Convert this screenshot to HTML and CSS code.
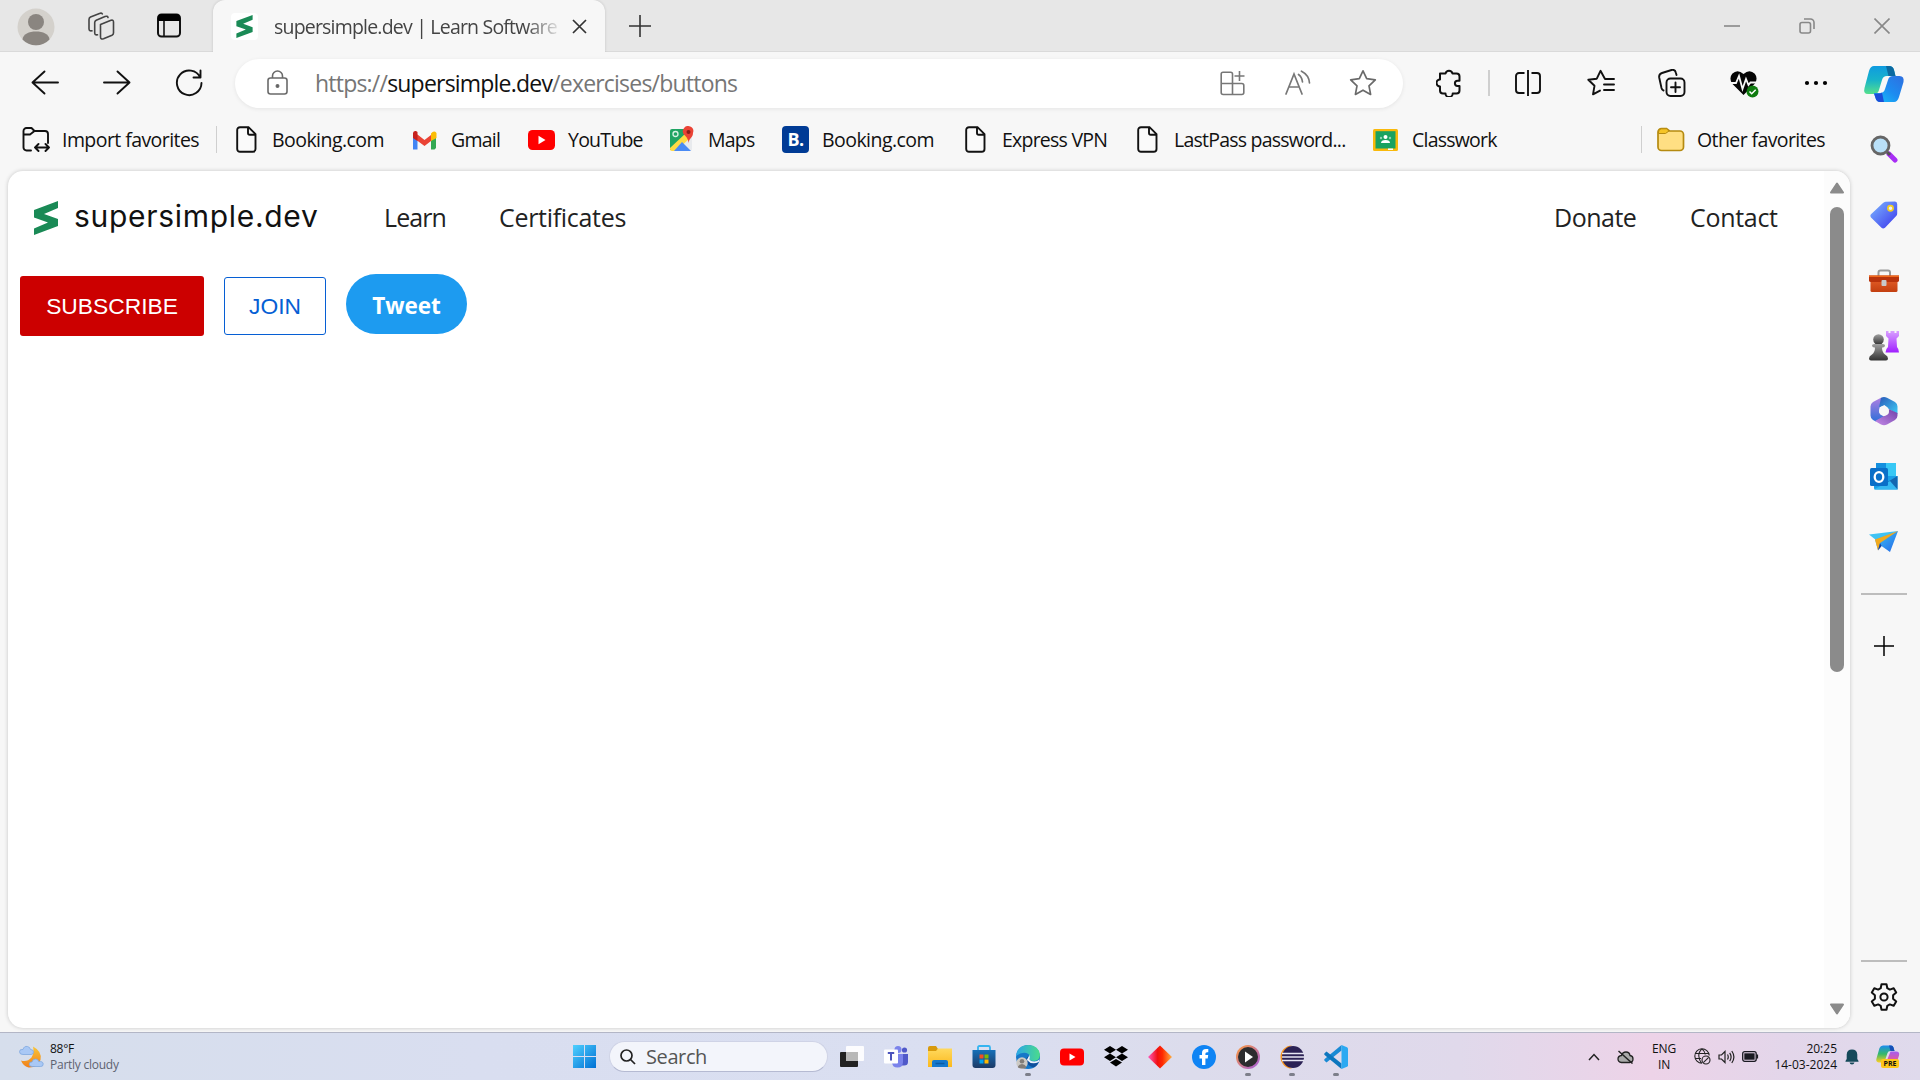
FILE: index.html
```html
<!DOCTYPE html>
<html lang="en">
<head>
<meta charset="utf-8">
<title>supersimple.dev | Learn Software</title>
<link rel="stylesheet" href="styles.css">
</head>
<body>
<svg class="defs" width="0" height="0">
  <defs>
    <linearGradient id="gTeal" x1="0" y1="0" x2="0" y2="1"><stop offset="0" stop-color="#0f9be0"/><stop offset=".5" stop-color="#18b3c9"/><stop offset="1" stop-color="#55e08c"/></linearGradient>
    <linearGradient id="gBlue" x1="1" y1="0" x2="0" y2="1"><stop offset="0" stop-color="#2f6fe0"/><stop offset=".5" stop-color="#1d8bf0"/><stop offset="1" stop-color="#17c3fa"/></linearGradient>
    <linearGradient id="gTag" x1="0" y1="0" x2="1" y2="1"><stop offset="0" stop-color="#7db8ff"/><stop offset="1" stop-color="#3a35ec"/></linearGradient>
    <linearGradient id="gBox" x1="0" y1="0" x2="0" y2="1"><stop offset="0" stop-color="#e8622a"/><stop offset="1" stop-color="#c33f10"/></linearGradient>
    <linearGradient id="gPawn" x1="0" y1="0" x2="0" y2="1"><stop offset="0" stop-color="#a0a0a0"/><stop offset="1" stop-color="#333"/></linearGradient>
    <linearGradient id="gRook" x1="0" y1="0" x2="0" y2="1"><stop offset="0" stop-color="#d9a0ff"/><stop offset="1" stop-color="#a020ff"/></linearGradient>
    <linearGradient id="gM1" x1="0" y1="0" x2="0" y2="1"><stop offset="0" stop-color="#ae7fe2"/><stop offset="1" stop-color="#2f6fd8"/></linearGradient>
    <linearGradient id="gM2" x1="0" y1="0" x2="1" y2="1"><stop offset="0" stop-color="#2a58b8"/><stop offset="1" stop-color="#3bcbf5"/></linearGradient>
    <linearGradient id="gM3" x1="0" y1="1" x2="1" y2="0"><stop offset="0" stop-color="#c58be8"/><stop offset="1" stop-color="#6f3fa8"/></linearGradient>
    <linearGradient id="gPlane" x1="0" y1="0" x2="1" y2="1"><stop offset="0" stop-color="#3cc8f5"/><stop offset="1" stop-color="#2566e8"/></linearGradient>
    <linearGradient id="gWin" x1="0" y1="0" x2="1" y2="1"><stop offset="0" stop-color="#4fd0ff"/><stop offset="1" stop-color="#0070d4"/></linearGradient>
    <linearGradient id="gStore" x1="0" y1="0" x2="0" y2="1"><stop offset="0" stop-color="#1670b8"/><stop offset="1" stop-color="#1c3a66"/></linearGradient>
    <linearGradient id="gEdge" x1="0" y1="0" x2="1" y2="0"><stop offset="0" stop-color="#2aa6e8"/><stop offset="1" stop-color="#4bdc8a"/></linearGradient>
    <linearGradient id="gDia" x1="0" y1="0" x2="1" y2="0"><stop offset="0" stop-color="#ff5bc0"/><stop offset=".4" stop-color="#f01010"/><stop offset=".6" stop-color="#ff2a00"/><stop offset="1" stop-color="#ffb040"/></linearGradient>
    <linearGradient id="gMed" x1="0" y1="0" x2="1" y2="1"><stop offset="0" stop-color="#ff9c3a"/><stop offset="1" stop-color="#a05be0"/></linearGradient>
    <linearGradient id="gMoon" x1="0" y1="0" x2="0" y2="1"><stop offset="0" stop-color="#f8c63a"/><stop offset="1" stop-color="#f07f1a"/></linearGradient>
    <linearGradient id="gFold" x1="0" y1="0" x2="0" y2="1"><stop offset="0" stop-color="#ffd95e"/><stop offset="1" stop-color="#fbb91e"/></linearGradient>
    <linearGradient id="gPre" x1="0" y1="0" x2="0" y2="1"><stop offset="0" stop-color="#1a8cf0"/><stop offset=".5" stop-color="#35b86a"/><stop offset="1" stop-color="#ffd020"/></linearGradient>
    <linearGradient id="gPre2" x1="0" y1="0" x2="0" y2="1"><stop offset="0" stop-color="#a55cf0"/><stop offset="1" stop-color="#fa5a78"/></linearGradient>
    <symbol id="page" viewBox="0 0 21 27"><path d="M4 1.2h8.5l7 7V23a2.8 2.8 0 0 1-2.8 2.8H4A2.8 2.8 0 0 1 1.2 23V4A2.8 2.8 0 0 1 4 1.2ZM12 1.5V7a1.8 1.8 0 0 0 1.8 1.8h5.7" fill="#fafafa" stroke="#111" stroke-width="1.900"/></symbol>
    <symbol id="slogo" viewBox="0 0 24 34"><path d="M24 0V7L10 13L24 18V25L0 34V27.5L14 21.5L0 16.5V9Z" fill="#1a8a56"/></symbol>
    <symbol id="ytube" viewBox="0 0 27 20"><rect width="27" height="20" rx="4.5" fill="#f00"/><path d="M10.5 5.8v8.4l7-4.2z" fill="#fff"/></symbol>
  </defs>
</svg>

<main class="browser">
  <header class="tabstrip">
    <div class="avatar"><svg width="38" height="38" viewBox="0 0 38 38"><circle cx="19" cy="19" r="18.5" fill="#d4d1cc"/><circle cx="19" cy="14" r="8" fill="#8a8580"/><path d="M5.5 31.5C6 26 12 23.5 19 23.5s13 2.500 13.500 8A18.500 18.500 0 0 1 5.500 31.500Z" fill="#8a8580"/></svg></div>
    <svg class="ic" width="28" height="28" viewBox="0 0 28 28" fill="none" stroke="#444" stroke-width="1.6" stroke-linejoin="round" stroke-linecap="round"><path d="M13.500 12.500 24 8.300q2.500-.8 2.500 1.700v11q0 1.500-1.500 2.200l-8.500 3.500q-3 1-3-1.700V14q0-1 0-1.500Z"/><path d="M10.500 22.800q-2.800.6-2.800-2V10.500q0-1.600 1.500-2.300L18 4.500q2.500-.8 3 1"/><path d="M5 18.800q-3 .6-3-2V7.500Q2 5.800 3.500 5l9-3.600q2-.7 2.800.5"/></svg>
    <svg class="ic" width="24" height="25" viewBox="0 0 24 25"><rect x="1" y="1.500" width="22" height="22" rx="3.500" fill="none" stroke="#111" stroke-width="2"/><path d="M1 8V5a4 4 0 0 1 4-4h14a4 4 0 0 1 4 4v3Z" fill="#000"/><path d="M7 8v15" stroke="#111" stroke-width="1.600"/></svg>
    <div class="tab">
      <span class="favicon"><svg width="17" height="23"><use href="#slogo"/></svg></span>
      <span class="tab-title">supersimple.dev | Learn Software</span>
      <svg width="15" height="15" viewBox="0 0 15 15"><path d="M1 1l13 13M14 1 1 14" stroke="#333" stroke-width="1.700"/></svg>
    </div>
    <svg class="newtab" width="24" height="24" viewBox="0 0 24 24"><path d="M12 1v22M1 12h22" stroke="#333" stroke-width="1.600"/></svg>
    <div class="winctl">
      <svg width="16" height="16" viewBox="0 0 16 16"><path d="M0 8h16" stroke="#888" stroke-width="1.600"/></svg>
      <svg width="16" height="16" viewBox="0 0 16 16" fill="none" stroke="#888" stroke-width="1.600"><rect x="1" y="4.500" width="10.500" height="10.500" rx="2"/><path d="M5 1h6.500A3.500 3.500 0 0 1 15 4.500V11"/></svg>
      <svg width="16" height="16" viewBox="0 0 16 16"><path d="M.5.5l15 15M15.500.5.5 15.500" stroke="#888" stroke-width="1.600"/></svg>
    </div>
  </header>

  <section class="toolbar">
    <svg width="28" height="28" viewBox="0 0 28 28" fill="none" stroke="#111" stroke-width="1.900" stroke-linecap="round" stroke-linejoin="round"><path d="M27 13.500H1.500M13.500 2.500 1.500 13.500l12 11"/></svg>
    <svg width="28" height="28" viewBox="0 0 28 28" fill="none" stroke="#111" stroke-width="1.900" stroke-linecap="round" stroke-linejoin="round"><path d="M1 13.500h25.500M14.500 2.500l12 11-12 11"/></svg>
    <svg width="28" height="28" viewBox="0 0 28 28" fill="none" stroke="#111" stroke-width="1.900" stroke-linecap="round" stroke-linejoin="round"><path d="M25.300 8.500A12.300 12.300 0 1 0 26.500 14M25.500 1.500v7h-7"/></svg>
    <div class="address">
      <svg width="21" height="26" viewBox="0 0 21 26" fill="none" stroke="#6a6a6a" stroke-width="1.600"><rect x="1" y="8" width="19" height="16" rx="2.500"/><path d="M5.500 8V6a5 5 0 0 1 10 0v2"/><circle cx="10.500" cy="16" r="1.200" fill="#555"/></svg>
      <span class="url">https://<em>supersimple.dev</em>/exercises/buttons</span>
      <svg width="25" height="25" viewBox="0 0 25 25" fill="none" stroke="#777" stroke-width="1.600"><path d="M12.500 12.500V3A1.800 1.800 0 0 0 10.700 1.200H3A1.800 1.800 0 0 0 1.200 3v18.500a2 2 0 0 0 2 2h18.600a2 2 0 0 0 2-2v-7a2 2 0 0 0-2-2H1.200M12.500 12.500v11M19.500 0v10M14.500 5h10"/></svg>
      <svg width="26" height="26" viewBox="0 0 26 26" fill="none" stroke="#777" stroke-width="1.700" stroke-linecap="round"><path d="M1 24 9 4l8 20M4 17h10M13.500 4.500q3.500 2.500 4 7.500M16.500 1.200Q24 5 24.500 13"/></svg>
      <svg width="28" height="28" viewBox="0 0 28 28" fill="none" stroke="#6a6a6a" stroke-width="1.700" stroke-linejoin="round"><path d="m14 1.800 3.700 7.900 8.600 1.100-6.300 6 1.600 8.600L14 21.200l-7.600 4.200L8 16.800l-6.300-6 8.600-1.100Z"/></svg>
    </div>
    <svg width="26" height="28" viewBox="0 0 26 28" fill="none" stroke="#111" stroke-width="2" stroke-linejoin="round"><path d="M4 4.500h5.500a3.600 3.600 0 0 1 7 0H20.500a3 3 0 0 1 3 3v4.200h-2a2.600 2.600 0 0 0 0 5.200h2v4.600a3 3 0 0 1-3 3h-3.800a3.600 3.600 0 0 1-7.200 0H7a3 3 0 0 1-3-3V17.500a3.500 3.500 0 0 1 0-7Z"/></svg>
    <i class="vline"></i>
    <svg width="26" height="28" viewBox="0 0 26 28" fill="none" stroke="#111" stroke-width="1.900"><path d="M13 1v26M9.500 4H4a3 3 0 0 0-3 3v14a3 3 0 0 0 3 3h5.500M16.500 4H22a3 3 0 0 1 3 3v14a3 3 0 0 1-3 3h-5.500"/></svg>
    <svg width="28" height="28" viewBox="0 0 28 28" fill="none" stroke="#111" stroke-width="1.900" stroke-linejoin="round" stroke-linecap="round"><path d="M27 10h-9L13.500 1.800 9.800 9.700l-8.500 1.100 6.200 6-1.500 8.600 7-3.800M17 15.500h10M17 21h10"/></svg>
    <svg width="28" height="28" viewBox="0 0 28 28" fill="none" stroke="#111" stroke-width="1.900" stroke-linecap="round"><rect x="8.500" y="9.500" width="18" height="17.500" rx="4"/><path d="M17.500 13.500v9.500M13 18.300h9M5.500 21.500Q4 21 3.500 19L1.200 8.500Q.7 5 4 4l9.500-3q3.500-.8 4.300 2.500l.7 2.500"/></svg>
    <svg width="29" height="29" viewBox="0 0 29 29"><path d="M13.500 26 2 14.500Q-1.200 9 2.200 4.700 7.500-.5 13.500 5q6-5.500 11.300-.3 3.400 4.300.2 9.800Z" fill="#050505"/><path d="M0 14h6l3-7 3.500 13L16 10l2.500 6 2-2.500H28" fill="none" stroke="#f7f7f7" stroke-width="1.800"/><circle cx="22.500" cy="22.500" r="6" fill="#107c10"/><path d="m19.500 22.500 2.200 2.200 4-4" stroke="#fff" stroke-width="1.500" fill="none"/></svg>
    <svg width="24" height="6" viewBox="0 0 24 6"><circle cx="3" cy="3" r="2.100"/><circle cx="12" cy="3" r="2.100"/><circle cx="21" cy="3" r="2.100"/></svg>
  </section>

  <nav class="bookmarks">
    <a class="import"><svg width="28" height="27" viewBox="0 0 28 27" fill="none" stroke="#111" stroke-width="1.900" stroke-linecap="round" stroke-linejoin="round"><path d="M9 24.500H4.500a3 3 0 0 1-3-3V5a3 3 0 0 1 3-3h5l3 3H23a3 3 0 0 1 3 3v9M1.500 8.500H8L12.500 5M13 21.500h14M16.500 18 13 21.500l3.500 3.500M23.500 18l3.500 3.500-3.500 3.500"/></svg><span>Import favorites</span></a>
    <a class="sep booking"><svg width="27" height="27"><use href="#page"/></svg><span>Booking.com</span></a>
    <a><svg width="27" height="20" viewBox="0 0 27 20"><path d="M2 19.500V5h4.500v14.500H3.500Z" fill="#4285f4"/><path d="M20 19.500V5h5v13l-1.500 1.500Z" fill="#34a853"/><path d="M2 3.500v4L13.500 16l6.500-5V5l-6.500 5L6.500 4.500Z" fill="#ea4335"/><path d="M2 8V3q.5-2.500 3-2l1.500 1v9Z" fill="#c5221f"/><path d="M20 11V3.500q3-3.500 5.500-.5V8Z" fill="#fbbc04"/></svg><span>Gmail</span></a>
    <a><svg width="27" height="20"><use href="#ytube"/></svg><span>YouTube</span></a>
    <a><svg width="27" height="27" viewBox="0 0 27 27"><rect x="2" y="3" width="22" height="22" rx="2" fill="#e8eaed"/><path d="M2 5a2 2 0 0 1 2-2h14v7L3 24H2Z" fill="#1fa463"/><path d="M2 22 18 7l4 5L8 25H4q-2 0-2-2Z" fill="#ffda44"/><path d="m6 25 8-9 9 9Z" fill="#4a8af4"/><circle cx="7.500" cy="8" r="2.500" fill="none" stroke="#d9f2e5" stroke-width="1.300"/><path d="M20.500 17q0-4-3.500-7.500A5.200 5.200 0 1 1 25 7q0 2-1 3.500-3 3-3.500 6.500Z" fill="#ea4335"/><circle cx="20.500" cy="6" r="2" fill="#8c1d18"/></svg><span>Maps</span></a>
    <a class="booking"><span class="bk">B.</span><span>Booking.com</span></a>
    <a><svg width="27" height="27"><use href="#page"/></svg><span>Express VPN</span></a>
    <a><svg width="27" height="27"><use href="#page"/></svg><span>LastPass password...</span></a>
    <a><svg width="27" height="22" viewBox="0 0 27 22"><rect x="1" y="0" width="25" height="22" rx="1.500" fill="#f9b90b"/><rect x="3.500" y="2.200" width="20" height="17.300" fill="#1aa260"/><circle cx="13.500" cy="8" r="2" fill="#fff"/><circle cx="9" cy="9" r="1.200" fill="#8fd3b4"/><circle cx="18" cy="9" r="1.200" fill="#8fd3b4"/><path d="M9 14q0-3 4.500-3t4.500 3Z" fill="#fff"/><path d="M16 19.500h5v1.500h-5z" fill="#fff"/></svg><span>Classwork</span></a>
    <a class="other"><svg width="28" height="25" viewBox="0 0 28 25"><path d="M1 5a3.500 3.500 0 0 1 3.500-3.500h5L12.500 4H23a3.500 3.500 0 0 1 3.500 3.500v12.500a3.500 3.500 0 0 1-3.500 3.500H4.500A3.500 3.500 0 0 1 1 20Z" fill="#ffdf83" stroke="#b58a10" stroke-width="1.700"/><path d="M1.500 6.500H8.500L12 4 9.500 1.800H4.500Q1.500 2 1.500 5Z" fill="#f5c426" stroke="#b58a10" stroke-width="1"/></svg><span>Other favorites</span></a>
  </nav>

  <article class="viewport">
    <div class="site">
      <header class="site-head">
        <svg width="24" height="34"><use href="#slogo"/></svg>
        <span class="brand">supersimple.dev</span>
        <span class="learn">Learn</span>
        <span>Certificates</span>
        <span class="donate">Donate</span>
        <span>Contact</span>
      </header>
      <div class="btns">
        <button class="sub">SUBSCRIBE</button>
        <button class="join">JOIN</button>
        <button class="tweet">Tweet</button>
      </div>
    </div>
    <div class="scroll">
      <svg width="16" height="12" viewBox="0 0 16 12"><path d="M8 1.500 14 10.500H2Z" fill="#8b8b8b" stroke="#8b8b8b" stroke-width="2" stroke-linejoin="round"/></svg>
      <div class="thumb"></div>
      <svg class="down" width="16" height="12" viewBox="0 0 16 12"><path d="M8 10.500 14 1.500H2Z" fill="#8b8b8b" stroke="#8b8b8b" stroke-width="2" stroke-linejoin="round"/></svg>
    </div>
  </article>

  <aside class="side">
    <svg width="42" height="38" viewBox="0 0 42 38"><path d="M11 1H26q4 0 5 4l1.500 6H24q-4 0-5 4l-3 10q-1 4-5 4H5Q0 29 1.500 23L6 6Q7.500 1 11 1Z" fill="url(#gTeal)"/><path d="M23 1h3q4 0 5 4l1.500 6h-7Z" fill="#0c6aa0"/><path d="M31 37H17q-3.500 0-4.500-4l-1.500-5h6q4 0 5-4l3-9q1-4 5-4h6.500q5 0 4 6L36 32q-1.500 5-5 5Z" fill="url(#gBlue)"/><path d="M11 28.500h5q2 0 3-1l2 9.500h-4q-3.500 0-4.500-4Z" fill="#1c4ed8"/></svg>
    <svg width="28" height="28" viewBox="0 0 28 28"><path d="m19 19 6 6" stroke="#a82ef5" stroke-width="5" stroke-linecap="round"/><path d="m16 16 4 4" stroke="#555" stroke-width="3"/><circle cx="10.500" cy="10.500" r="8.500" fill="#b9e0f8" stroke="#666" stroke-width="2.800"/></svg>
    <svg width="28" height="28" viewBox="0 0 28 28"><path d="M15.500.8 25 .5q2.200.2 2.200 2.500v9.500q0 1.500-1 2.500L15 26.700q-2 1.500-3.500 0L1 16.500q-1.300-1.700 0-3.300L13 2q1-1 2.500-1.200Z" fill="url(#gTag)"/><circle cx="20.500" cy="7.300" r="2.600" fill="#eef" stroke="#f3cf22" stroke-width="1.700"/></svg>
    <svg width="30" height="24" viewBox="0 0 30 24"><path d="M9.500 7V3.500q0-2 2-2h7.500q2 0 2 2V7" fill="none" stroke="#999" stroke-width="2"/><rect x="1.500" y="8" width="27" height="15" rx="1.500" fill="url(#gBox)"/><path d="M0 6.500h30v5q0 1.500-2 1.500H2q-2 0-2-1.500Z" fill="#b8330c"/><path d="M0 6.500h30v1.500H0Z" fill="#f06a1c"/><rect x="12.500" y="11" width="5" height="6" rx="1" fill="#c9c9c9"/></svg>
    <svg width="30" height="30" viewBox="0 0 30 30"><path d="M17 0h2.500v2h2V0h4v2h2V0H30v5l-2.500 2.500.5 8.500q2 2 2 5.500H16.500q0-3.500 2.500-5.500l.5-8.500L17 5Z" fill="url(#gRook)"/><circle cx="9.500" cy="8.500" r="5.300" fill="url(#gPawn)"/><path d="M3 14.500q0-1.500 2-1.500h9q2 0 2 1.500T14 16.500h-1q0 4.500 3 7 3 1.500 3 4 0 2-2 2H2q-2 0-2-2 0-2.500 3-4 3-2.500 3-7H5q-2-.5-2-2Z" fill="url(#gPawn)"/></svg>
    <svg width="28" height="30" viewBox="0 0 28 30"><path d="M11 1.800 3 6Q.5 7.500.5 10.500v9Q.5 22.500 3 24l3 1.500 8-5-4.500-3.500v-6L13 9Z" fill="url(#gM1)"/><path d="M11 1.800q3-1.800 6 0L25 6q2.500 1.500 2.500 4.500V18L18.500 13l-4-4L9 11.500Z" fill="url(#gM2)"/><path d="M5 25l6 3.400q3 1.600 6 0L25 24q2.500-1.500 2.500-4.500V17l-9-4v4.500L14 20Z" fill="url(#gM3)"/><circle cx="14" cy="15" r="5" fill="#f7f7f7"/></svg>
    <svg width="28" height="28" viewBox="0 0 28 28"><rect x="6" y="1" width="20" height="16" fill="#38c8f5"/><path d="M6 1h10v12H6Z" fill="#1490df"/><path d="M4 14h23.500v13.500H5.500q-1.500 0-1.500-1.500Z" fill="#1aa0e8"/><path d="m27.500 14-10 6 10 7.500Z" fill="#1466b0"/><path d="m4 27.500 16-8.500 7.500 8.500Z" fill="#35b8f1"/><rect x="0" y="6" width="18" height="18" rx="1.500" fill="#0a6fc8"/><ellipse cx="9" cy="15" rx="4.300" ry="4.800" fill="none" stroke="#fff" stroke-width="2.300"/></svg>
    <svg width="30" height="22" viewBox="0 0 30 22"><path d="M0 3.500 29 0 7 9Z" fill="#3fc3f4"/><path d="M29 0 21 21l-8.500-6L9 19 6 8.500Z" fill="url(#gPlane)"/><path d="M29 0 6 8.500 9 19.500 11 12Z" fill="#f2a91c"/><path d="m11 12-2 7.500 3.500-4.500Z" fill="#1b3f9a"/></svg>
    <hr>
    <svg width="20" height="20" viewBox="0 0 20 20"><path d="M10 0v20M0 10h20" stroke="#000" stroke-width="1.500"/></svg>
    <hr class="low">
    <svg width="28" height="28" viewBox="0 0 28 28" fill="none" stroke="#111" stroke-width="2" stroke-linejoin="round"><path d="M11.500 1.200h5l.8 4 2.500 1.400 3.900-1.300 2.500 4.200-3.100 2.800v3.400l3.100 2.800-2.500 4.200-3.900-1.300-2.500 1.400-.8 4h-5l-.8-4-2.500-1.400-3.900 1.300-2.500-4.200 3.100-2.800v-3.400L1.800 9.500l2.500-4.200 3.900 1.300 2.500-1.400Z"/><circle cx="14" cy="14" r="3.600"/></svg>
  </aside>
</main>

<footer class="taskbar">
  <div class="weather">
    <svg width="25" height="24" viewBox="0 0 25 24"><path d="M14 1.500q9.500 5 7.500 13.500-3 8-12 7.500Q4 21 2 15.500q6 2 10.500-3 3-5 1.500-11Z" fill="url(#gMoon)"/><path d="M4 9.500q-3.500 0-3.500-2.800T4 4.500Q5 .8 8.500 1.500q2.500.5 3 3 3 0 3 2.500T12 9.500Z" fill="#a9c8f5" stroke="#7fa8e0" stroke-width=".8"/><path d="M13 21.500q-3-.2-2.800-2.500T13 17q1-3.500 4-3 2.500.5 2.700 2.500 4.500-.3 4.500 2.500T21.500 21.500Z" fill="#a9c8f5" stroke="#7fa8e0" stroke-width=".8"/></svg>
    <p>88°F<br><small>Partly cloudy</small></p>
  </div>
  <div class="apps">
    <svg class="start" width="23" height="23" viewBox="0 0 23 23"><path d="M0 0h11v11H0ZM12 0h11v11H12ZM0 12h11v11H0ZM12 12h11v11H12Z" fill="url(#gWin)"/></svg>
    <div class="search"><svg width="16" height="16" viewBox="0 0 16 16" fill="none" stroke="#222" stroke-width="1.700"><circle cx="6.500" cy="6.500" r="5.500"/><path d="m10.500 10.500 4.500 4.500"/></svg><span>Search</span></div>
    <span class="app"><svg viewBox="0 0 24 24"><rect x="0" y="7" width="18" height="15" rx="1" fill="#222"/><rect x="6" y="1" width="18" height="15" rx="1" fill="#fff" fill-opacity=".9"/><rect x="6" y="7" width="12" height="9" fill="#b8b8b8"/></svg></span>
    <span class="app"><svg viewBox="0 0 24 24"><circle cx="14" cy="4.500" r="3.500" fill="#7b83eb"/><circle cx="20.500" cy="5" r="2.600" fill="#5059c9"/><path d="M16 9h8v8q0 3.500-4 3.500h-4Z" fill="#5059c9"/><path d="M8 9h11v8q0 5.500-5.500 5.500T8 17Z" fill="#7b83eb"/><rect x="0" y="4.500" width="14" height="14" rx="1" fill="#fff"/><path d="M3.800 8h6.400M7 8v7.500" stroke="#4b53bc" stroke-width="2"/></svg></span>
    <span class="app"><svg viewBox="0 0 24 24"><path d="M0 3q0-2 2-2h6l2 3v4H0Z" fill="#d89a0c"/><path d="M0 6h8l2-2.500h14V22H0Z" fill="url(#gFold)"/><path d="M4 22v-5q0-2 2-2h12q2 0 2 2v5Z" fill="#1478cc"/><path d="M7.500 18.500h9" stroke="#0a5ba5" stroke-width="1.500"/></svg></span>
    <span class="app"><svg viewBox="0 0 24 24"><path d="M6 6V2.500q0-1.500 1.500-1.500h9Q18 1 18 2.500V6" fill="none" stroke="#35b4f0" stroke-width="1.800"/><path d="M.5 5h23v15q0 3-3 3h-17q-3 0-3-3Z" fill="url(#gStore)"/><path d="M7.500 9.500h4v4h-4Z" fill="#f25022"/><path d="M12.500 9.500h4v4h-4Z" fill="#7fba00"/><path d="M7.500 14.500h4v4h-4Z" fill="#00a4ef"/><path d="M12.500 14.500h4v4h-4Z" fill="#ffb900"/></svg></span>
    <span class="app on"><svg viewBox="0 0 24 24"><circle cx="12" cy="12" r="12" fill="#1577c8"/><path d="M0 11Q1.500 0 12.500 0 23 .5 24 10q-.5 6-6.500 6-4.500 0-4-2.500 1-2-1-4.500Q7 5.500 0 11Z" fill="url(#gEdge)"/><path d="M13 11q-1 5 4 6 3.500.5 6-1-1 4-5 6.500-7-1.500-8-7 0-3 3-4.500Z" fill="#0e4f9c"/><path d="M13.500 10q.7 3-.2 4 1 2.500 5 2.500 3 0 5-2l-.5 2.500q-7 3.500-12-2Z" fill="#eaf2fb"/><circle cx="6" cy="18" r="5.700" fill="#ccc9c4"/><circle cx="6" cy="16.200" r="2.300" fill="#827d78"/><path d="M2 21.500q1-2.500 4-2.500t4 2.500-4 2-4-2Z" fill="#827d78"/></svg></span>
    <span class="app"><svg viewBox="0 0 24 24"><rect y="3.500" width="24" height="17" rx="4" fill="#f00"/><path d="M9.500 8.500v7l6-3.500z" fill="#fff"/></svg></span>
    <span class="app"><svg viewBox="0 0 24 24"><path d="M6 1l6 3.800-6 3.700L0 4.800ZM18 1l6 3.800-6 3.700-6-3.700ZM6 8.600l6 3.700L6 16l-6-3.700ZM18 8.600l6 3.700-6 3.700-6-3.700ZM12 14l6 3.600-6 3.800-6-3.800Z" fill="#000"/></svg></span>
    <span class="app"><svg viewBox="0 0 24 24"><path d="m12 .5 12 11.500-12 11.500L0 12Z" fill="url(#gDia)"/></svg></span>
    <span class="app"><svg viewBox="0 0 24 24"><circle cx="12" cy="12" r="12" fill="#0f84f4"/><path d="M10 20v-6.500H7.500V10H10V8q0-4 4-4h2.300v3.200H15q-1.600 0-1.600 1.500V10h2.800l-.5 3.500h-2.300V20Z" fill="#fff"/></svg></span>
    <span class="app on"><svg viewBox="0 0 24 24"><circle cx="12" cy="12" r="12" fill="url(#gMed)"/><circle cx="12" cy="12" r="10" fill="#2c2c2e"/><path d="M9 6.500v11l8-5.500Z" fill="#fff"/></svg></span>
    <span class="app on"><svg viewBox="0 0 24 24"><path d="M12 .5a11.500 11.500 0 0 0 0 23Q3 19 3 12T12 .5Z" fill="#f7941e"/><circle cx="13" cy="12" r="11" fill="#2c2255"/><path d="M2 8.500h22M2 12h22M2 15.500h22" stroke="#e8e8f4" stroke-width="1.400"/></svg></span>
    <span class="app on"><svg viewBox="0 0 24 24"><path d="M17.500 5.500 2.500 17.500.3 15.500v-1.300L17.500 0Z" fill="#1a8ad4"/><path d="M17.500 18.500 2.500 6.500.3 8.500v1.300L17.500 24Z" fill="#0c76be"/><path d="M17.500 0 23 2.300q1 .5 1 1.500v16.400q0 1-1 1.500L17.500 24Z" fill="#2ba9f2"/></svg></span>
  </div>
  <div class="tray">
    <svg width="12" height="8" viewBox="0 0 12 8"><path d="m1 7 5-5.500L11 7" fill="none" stroke="#222" stroke-width="1.500"/></svg>
    <svg width="17" height="14" viewBox="0 0 17 14"><path d="M4.500 12.500Q1 12 1 9t3.500-3.500Q5.500 2 9 2t4 3.500q3 .3 3 3.500t-3.500 3.500Z" fill="#aaa" stroke="#222" stroke-width="1.300"/><path d="m1.500 1 14 12.500" stroke="#222" stroke-width="1.500"/></svg>
    <p class="lang">ENG<br>IN</p>
    <svg width="17" height="17" viewBox="0 0 17 17" fill="none" stroke="#222" stroke-width="1.100"><path d="M8 15.200A7.200 7.200 0 1 1 15.200 7.500M1.500 5.500h13M1.500 10.500H7M8 .8Q4.500 4 4.800 8t2.700 7M8 .8q3 2.500 3.200 5.700"/><circle cx="12" cy="12" r="4"/><path d="m9.300 14.700 5.400-5.400"/></svg>
    <svg width="17" height="14" viewBox="0 0 17 14" fill="none" stroke="#222" stroke-width="1.200"><path d="M1 5h2.500L7 1.500v11L3.500 9H1ZM9.500 4.500q1.500 2.500 0 5M11.700 2.800q2.800 4.200 0 8.400M13.800 1q4.200 6 0 12"/></svg>
    <svg width="17" height="11" viewBox="0 0 17 11"><rect x=".7" y=".7" width="13.500" height="9.600" rx="2" fill="none" stroke="#1a1a22" stroke-width="1.300"/><rect x="2.300" y="2.300" width="10.300" height="6.400" fill="#1a1a22"/><path d="M15.300 3.500v4" stroke="#1a1a22" stroke-width="1.600"/></svg>
    <p class="clock">20:25<br>14-03-2024</p>
    <svg width="14" height="16" viewBox="0 0 14 16"><path d="M7 .5q5 0 5.300 5V10l1.200 2v.7H.5V12l1.200-2V5.500Q2 .5 7 .5ZM4.500 13.500h5Q9 15.500 7 15.500t-2.500-2Z" fill="#15495a"/></svg>
    <span class="pre"><svg width="24" height="20" viewBox="0 0 24 20"><path d="M7 .5h8q2 0 2.500 2l1 3.500h-4q-2.500 0-3 2l-2.500 7.500q-.5 2-3 2H3q-3.500 0-2.500-4L3.500 3Q4.500.5 7 .5Z" fill="url(#gPre)"/><path d="M13 .5h2q2 0 2.500 2l1 3.500h-4Z" fill="#1650b8"/><path d="M14.500 6.500H20q4 0 3 4l-2 6q-.8 2.500-3.500 2.500H9.500Z" fill="url(#gPre2)"/></svg><b>PRE</b></span>
  </div>
</footer>
</body>
</html>
```
FILE: styles.css
```css
* { box-sizing: border-box; }
body { margin: 0; width: 1920px; height: 1080px; overflow: hidden; display: grid; grid-template-rows: 1032px 48px; background: #f7f7f7; font-family: "Open Sans", "Noto Sans", sans-serif; color: #111; white-space: nowrap; }
svg { display: block; flex: none; }
.defs { position: absolute; }
p { margin: 0; }

.browser { display: grid; grid-template-columns: 1856px 64px; grid-template-rows: 52px 60px 59px 861px; }

.tabstrip { grid-column: 1 / 3; background: #e7e7e7; border-bottom: 1px solid #dadada; display: flex; align-items: center; padding-left: 17px; }
.avatar { margin-right: 32px; padding-top: 2px; }
.tabstrip .ic { margin-right: 42px; }
.tabstrip .ic + .ic { margin-right: 32px; }
.tab { width: 392px; height: 52px; margin-bottom: -1px; background: #f7f7f7; border-radius: 12px 12px 0 0; box-shadow: 0 0 3px rgba(0,0,0,.16); clip-path: inset(-4px -4px 0 -4px); display: flex; align-items: center; padding-left: 18px; }
.favicon { width: 27px; height: 27px; background: #fff; border-radius: 4px; display: grid; place-items: center; margin-right: 16px; }
.tab-title { width: 286px; margin-right: 12px; color: #444; font-size: 19.500px; letter-spacing: -.8px; mask-image: linear-gradient(90deg, #000 88%, rgba(0,0,0,.15) 99%); }
.newtab { margin-left: 23px; }
.winctl { margin-left: auto; display: flex; gap: 59px; padding-right: 30px; }

.toolbar { display: grid; grid-template-columns: 72px 72px 60px 1201px 52px 27px 72px 71px 72px 74px auto; padding-left: 31px; align-items: center; padding-top: 2px; }
.address { width: 1168px; height: 49px; border-radius: 25px; background: #fff; box-shadow: 0 1px 4px rgba(0,0,0,.08); display: grid; grid-template-columns: 48px 905px 65px 64px auto; align-items: center; padding-left: 32px; }
.url { font-size: 23px; color: #767676; letter-spacing: -.79px; padding-bottom: 1px; }
.url em { font-style: normal; color: #111; }
.vline { width: 1.500px; height: 26px; background: #cfcfcf; }

.bookmarks { display: grid; grid-template-columns: 211px 178px 117px 140px 114px 180px 172px 238px auto 215px; padding-left: 22px; align-items: center; font-size: 19.500px; padding-bottom: 4px; }
.bookmarks a { display: flex; align-items: center; gap: 13px; letter-spacing: -.77px; height: 27px; }
.bookmarks .booking { letter-spacing: -.55px; }
.bookmarks .import { letter-spacing: -.57px; gap: 12px; }
.bookmarks .sep { border-left: 1.500px solid #cfcfcf; margin-left: -17px; padding-left: 16px; gap: 12px; }
.bookmarks .other { border-left: 1.500px solid #cfcfcf; padding-left: 15px; letter-spacing: -.6px; gap: 12px; }
.bk { width: 27px; height: 27px; border-radius: 4px; background: #003b95; color: #fff; font-weight: 700; font-size: 18px; line-height: 26px; text-align: center; }

.viewport { margin-left: 8px; width: 1842px; height: 857px; background: #fff; border-radius: 15px; box-shadow: 0 0 4px rgba(0,0,0,.2); display: flex; overflow: hidden; }
.site { flex: 1; }
.site-head { display: grid; grid-template-columns: 40px 310px 115px 1055px 136px auto; height: 94px; padding-left: 26px; align-items: center; font-size: 25px; letter-spacing: -.3px; color: #222; }
.site-head span { padding-bottom: 3px; }
.site-head .brand { font: 400 30px Inter, sans-serif; letter-spacing: .7px; color: #111; padding-bottom: 4px; }
.learn { letter-spacing: -.9px; }
.donate { letter-spacing: -.5px; }
.btns { display: flex; padding: 9px 0 0 12px; }
button { font: 22.800px "Liberation Sans", sans-serif; border: 0; padding: 0; height: 60px; }
.sub { width: 184px; background: #c00; color: #fff; border-radius: 3px; margin-top: 2px; }
.join { width: 102px; height: 58px; margin: 3px 0 0 20px; background: #fff; color: #065fd4; border: 1.500px solid #065fd4; border-radius: 3px; }
.tweet { width: 121px; margin-left: 20px; padding-top: 2px; background: #1d9bf0; color: #fff; border-radius: 30px; font-family: "Open Sans", sans-serif; font-weight: 700; font-size: 22.500px; }
.scroll { width: 26px; background: #fcfcfc; display: flex; flex-direction: column; align-items: center; padding: 11px 0 13px; }
.thumb { width: 14px; height: 465px; margin-top: 13px; border-radius: 7px; background: #8b8b8b; }
.down { margin-top: auto; }

.side { grid-column: 2; grid-row: 2 / 5; display: grid; grid-template-rows: 64px 66px 66px 65px 65px 65px 66px 65px 40px 64px 284px 70px; padding-right: 9px; justify-items: center; align-items: center; }
hr { width: 46px; height: 2px; border: 0; margin: 0; background: #bdbdbd; }
.low { align-self: end; }

.taskbar { border-top: 1px solid #b3b6c6; background: linear-gradient(90deg, #d6deec, #d9def0 25%, #dadff1 50%, #dcdcec 62%, #e0d9eb 76%, #edd3e8 86%, #e3d6ea 93%, #dfdaec); display: grid; grid-template-columns: 573px 1015px auto; align-items: center; font-size: 12px; }
.weather { display: flex; align-items: center; padding-left: 19px; gap: 6px; line-height: 16px; letter-spacing: -.25px; }
small { font-size: 12px; color: #5d6270; }
.apps { display: flex; align-items: center; }
.search { width: 219px; height: 31px; margin: 0 12px 0 13px; background: #f3f5fb; border-radius: 16px; border: 1px solid #cfd3e6; border-bottom-color: #b5bad2; display: flex; align-items: center; gap: 10px; padding-left: 10px; font-size: 20px; letter-spacing: -.4px; color: #555; }
.app { width: 24px; height: 24px; margin-right: 20px; position: relative; }
.app.on::after { content: ""; position: absolute; left: 9px; top: 28px; width: 6px; height: 3px; border-radius: 2px; background: #7d7f8a; }
.tray { display: grid; grid-template-columns: 29px 29px 48px 24px 24px 24px 71px 40px auto; align-items: center; line-height: 16px; }
.lang { text-align: center; width: 36px; letter-spacing: -.2px; }
.clock { text-align: right; }
.tray .clock + svg { margin-left: 8px; }
.pre { position: relative; height: 23px; margin-left: -1px; }
.pre b { position: absolute; left: 5px; top: 14px; width: 18px; height: 9px; border-radius: 2px; background: #ffc61a; font-size: 7px; line-height: 9px; text-align: center; }
```
